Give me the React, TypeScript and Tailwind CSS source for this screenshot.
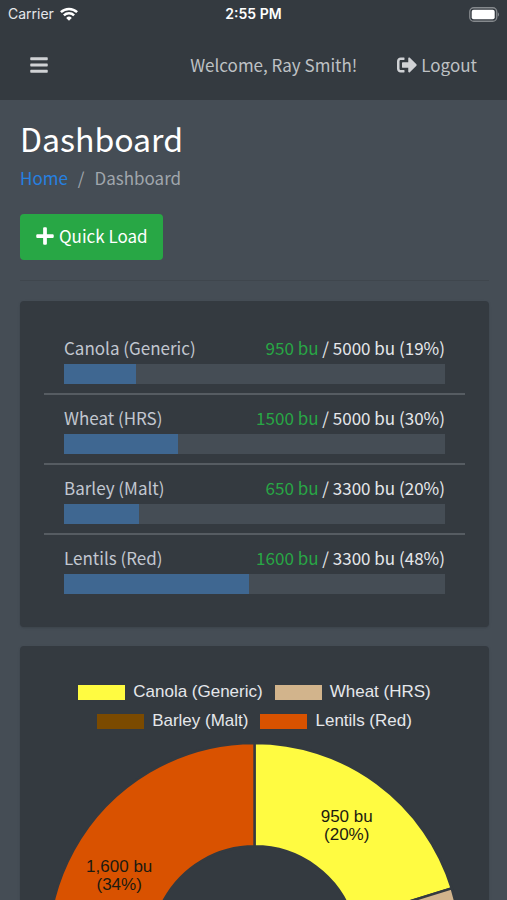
import { FaBars, FaPlus, FaSignOutAlt } from 'react-icons/fa';

type Bin = {
    name: string;
    amount: number;
    capacity: number;
    percent: number;
    color: string;
};

const bins: Bin[] = [
    { name: 'Canola (Generic)', amount: 950, capacity: 5000, percent: 19, color: '#fffb41' },
    { name: 'Wheat (HRS)', amount: 1500, capacity: 5000, percent: 30, color: '#d2b48c' },
    { name: 'Barley (Malt)', amount: 650, capacity: 3300, percent: 20, color: '#7b4a00' },
    { name: 'Lentils (Red)', amount: 1600, capacity: 3300, percent: 48, color: '#d95200' },
];

const OUTER = 206;
const INNER = 103;

function point(radius: number, angle: number) {
    return `${(radius * Math.sin(angle)).toFixed(2)} ${(-radius * Math.cos(angle)).toFixed(2)}`;
}

function slicePath(start: number, end: number) {
    const large = end - start > Math.PI ? 1 : 0;
    return `M${point(OUTER, start)} A${OUTER} ${OUTER} 0 ${large} 1 ${point(OUTER, end)} L${point(INNER, end)} A${INNER} ${INNER} 0 ${large} 0 ${point(INNER, start)} Z`;
}

function StatusBar() {
    return (
        <div className="grid grid-cols-3 items-center h-7 px-2 font-['Inter',sans-serif] text-white">
            <div className="flex items-center gap-1.5 text-sm text-gray-200">
                Carrier
                <svg viewBox="0 0 18 14" className="w-[18px] h-3.5" fill="none" stroke="#fff" strokeWidth="2.5">
                    <path d="M0.9 5.2a11.6 11.6 0 0 1 16.2 0" />
                    <path d="M3.9 8.4a7.3 7.3 0 0 1 10.2 0" />
                    <path d="M9 13.7 6.2 10.9a4 4 0 0 1 5.6 0Z" fill="#fff" stroke="none" />
                </svg>
            </div>
            <div className="text-center text-sm font-semibold whitespace-nowrap">2:55 PM</div>
            <svg viewBox="0 0 31 15" className="w-[31px] h-[15px] justify-self-end">
                <rect x="1.75" y="0.75" width="27" height="13.5" rx="4" fill="none" stroke="#85898d" strokeWidth="1.3" />
                <rect x="3.7" y="2.7" width="23" height="9.6" rx="2" fill="#fff" />
                <path d="M29.8 5.2c1.6 1 1.6 3.6 0 4.6Z" fill="#85898d" />
            </svg>
        </div>
    );
}

function Navbar() {
    return (
        <nav className="flex items-center justify-between h-[72px] pt-0.5 pl-[29px] pr-[30px] text-[#bec1c4]">
            <button type="button" aria-label="Toggle menu" className="text-[20px] text-[#d0d2d5]">
                <FaBars />
            </button>
            <div className="flex items-center gap-10">
                <span>Welcome, Ray Smith!</span>
                <a href="#logout" className="flex items-center gap-1">
                    <FaSignOutAlt className="text-[20px] text-[#d0d2d5]" />
                    Logout
                </a>
            </div>
        </nav>
    );
}

function BinLevels() {
    return (
        <section className="bg-[#343a40] rounded p-6 shadow-sm">
            <ul className="divide-y-2 divide-[#565c62]">
                {bins.map((bin) => (
                    <li key={bin.name} className="px-5 pt-[11px] pb-[9px]">
                        <div className="flex justify-between leading-6 mb-1">
                            <span className="text-[#c2c7d0]">{bin.name}</span>
                            <span className="text-gray-200">
                                <span className="text-[#28a745]">{bin.amount} bu</span> / {bin.capacity} bu ({bin.percent}%)
                            </span>
                        </div>
                        <div
                            role="progressbar"
                            aria-label={bin.name}
                            aria-valuenow={bin.percent}
                            className="h-5 bg-[#454d55]"
                        >
                            <div className="h-full bg-[#3f6791]" style={{ width: `${(bin.amount / bin.capacity) * 100}%` }} />
                        </div>
                    </li>
                ))}
            </ul>
        </section>
    );
}

function GrainChart() {
    const total = bins.reduce((sum, bin) => sum + bin.amount, 0);
    let angle = 0;
    const slices = bins.map((bin) => {
        const start = angle;
        angle += (bin.amount / total) * Math.PI * 2;
        const middle = (start + angle) / 2;
        const radius = (OUTER + INNER) / 2;
        return {
            ...bin,
            path: slicePath(start, angle),
            x: Math.round(radius * Math.sin(middle)),
            y: Math.round(-radius * Math.cos(middle)),
            share: Math.round((bin.amount / total) * 100),
        };
    });

    return (
        <section className="bg-[#343a40] rounded px-6 pt-8 pb-6 shadow-sm font-['Liberation_Sans',Arial,sans-serif]">
            <ul className="flex flex-wrap justify-center gap-x-3 gap-y-[1px] px-6 text-[17px] leading-7 text-gray-200">
                {bins.map((bin) => (
                    <li key={bin.name} className="flex items-center gap-2">
                        <span className="w-[47px] h-[15px]" style={{ backgroundColor: bin.color }} />
                        {bin.name}
                    </li>
                ))}
            </ul>
            <svg viewBox="-210 -208 420 416" className="w-full mt-1.5" role="img" aria-label="Bushels by crop">
                {slices.map((slice) => (
                    <path key={slice.name} d={slice.path} fill={slice.color} stroke="#343a40" strokeWidth="2.4" />
                ))}
                {slices.map((slice) => (
                    <text key={slice.name} textAnchor="middle" fontSize="17" fill="#1c1a10">
                        <tspan x={slice.x} y={slice.y - 3}>{slice.amount.toLocaleString('en-US')} bu</tspan>
                        <tspan x={slice.x} y={slice.y + 15}>({slice.share}%)</tspan>
                    </text>
                ))}
            </svg>
        </section>
    );
}

export default function App() {
    return (
        <div className="min-h-screen bg-[#454d55] font-['Noto_Sans_CJK_SC',sans-serif] text-[17px] leading-7">
            <header className="bg-[#343a40]">
                <StatusBar />
                <Navbar />
            </header>
            <main className="pl-5 pr-[18px] pt-5 pb-5">
                <h1 className="text-[32px] leading-9 text-white">Dashboard</h1>
                <ol className="flex gap-[10px] pt-2 text-[#a0a6ac]">
                    <li>
                        <a href="#home" className="text-[#2680e0]">Home</a>
                    </li>
                    <li aria-hidden="true">/</li>
                    <li>Dashboard</li>
                </ol>
                <button type="button" className="flex items-center gap-1 h-[46px] px-[15px] pb-0.5 mt-[22px] rounded bg-[#28a745] text-white">
                    <FaPlus className="text-[20px]" />
                    Quick Load
                </button>
                <hr className="my-5 border-[#3f464d]" />
                <div className="flex flex-col gap-[19px]">
                    <BinLevels />
                    <GrainChart />
                </div>
            </main>
        </div>
    );
}
